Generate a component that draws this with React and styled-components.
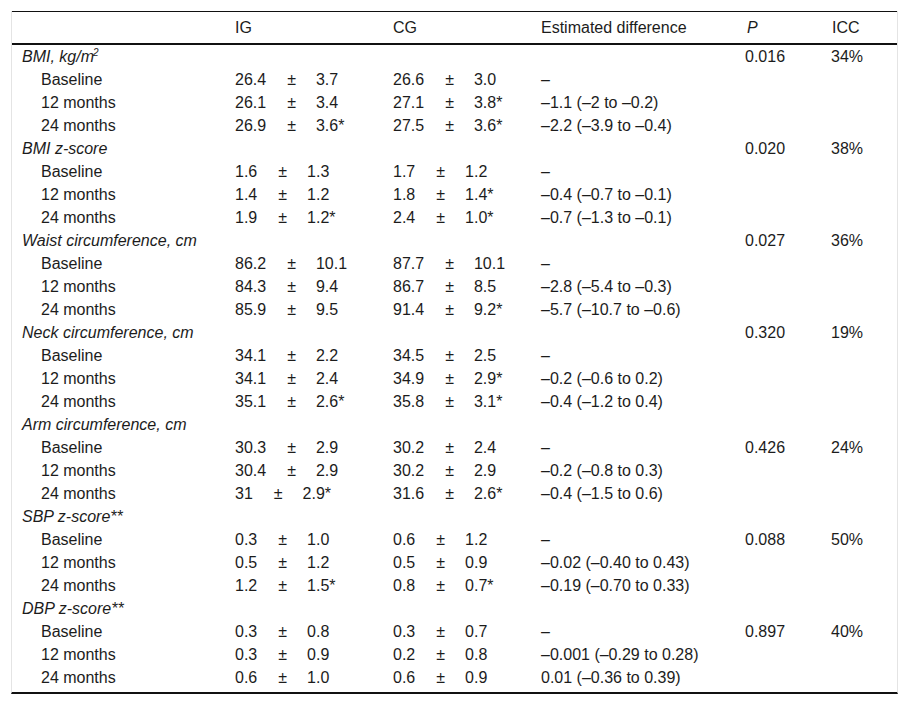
import React from "react";
import styled, { createGlobalStyle } from "styled-components";

const Global = createGlobalStyle`
  html, body { margin: 0; padding: 0; background: #fff; }
  body { font-family: "Liberation Sans", Arial, sans-serif; color: #1c1c1c; }
`;

const Frame = styled.div`
  margin: 11px 0 0 11px;
  width: 885px;
  border-left: 1px solid #e4e4e4;
  border-right: 1px solid #e4e4e4;
  border-bottom: 2px solid #111;
  padding-bottom: 3px;
`;

const Table = styled.table`
  width: 885px;
  border-collapse: collapse;
  table-layout: fixed;
  font-size: 16px;
`;

const Head = styled.thead`
  border-top: 1px solid #111;
  border-bottom: 2px solid #111;
`;

const Th = styled.th`
  height: 31px;
  padding: 0 0 0 ${(p) => p.$pl || 0}px;
  text-align: left;
  font-weight: normal;
  font-style: ${(p) => (p.$italic ? "italic" : "normal")};
  vertical-align: middle;
  line-height: 31px;
`;

const Td = styled.td`
  height: 23px;
  padding: 0 0 0 ${(p) => p.$pl || 0}px;
  line-height: 23px;
  text-align: left;
  vertical-align: middle;
  white-space: nowrap;
  font-style: ${(p) => (p.$italic ? "italic" : "normal")};
`;

const Stat = styled.span`
  display: inline-flex;
  align-items: baseline;
`;

const Pm = styled.span`
  margin: 0 20px 0 21px;
`;

const Sup = styled.sup`
  font-size: 10px;
  line-height: 0;
  vertical-align: 6px;
  margin-left: -1px;
`;

const groups = [
  {
    label: (
      <>
        BMI, kg/m<Sup>2</Sup>
      </>
    ),
    at: "label",
    p: "0.016",
    icc: "34%",
    rows: [
      ["Baseline", ["26.4", "3.7"], ["26.6", "3.0"], "–"],
      ["12 months", ["26.1", "3.4"], ["27.1", "3.8*"], "–1.1 (–2 to –0.2)"],
      ["24 months", ["26.9", "3.6*"], ["27.5", "3.6*"], "–2.2 (–3.9 to –0.4)"],
    ],
  },
  {
    label: "BMI z-score",
    at: "label",
    p: "0.020",
    icc: "38%",
    rows: [
      ["Baseline", ["1.6", "1.3"], ["1.7", "1.2"], "–"],
      ["12 months", ["1.4", "1.2"], ["1.8", "1.4*"], "–0.4 (–0.7 to –0.1)"],
      ["24 months", ["1.9", "1.2*"], ["2.4", "1.0*"], "–0.7 (–1.3 to –0.1)"],
    ],
  },
  {
    label: "Waist circumference, cm",
    at: "label",
    p: "0.027",
    icc: "36%",
    rows: [
      ["Baseline", ["86.2", "10.1"], ["87.7", "10.1"], "–"],
      ["12 months", ["84.3", "9.4"], ["86.7", "8.5"], "–2.8 (–5.4 to –0.3)"],
      ["24 months", ["85.9", "9.5"], ["91.4", "9.2*"], "–5.7 (–10.7 to –0.6)"],
    ],
  },
  {
    label: "Neck circumference, cm",
    at: "label",
    p: "0.320",
    icc: "19%",
    rows: [
      ["Baseline", ["34.1", "2.2"], ["34.5", "2.5"], "–"],
      ["12 months", ["34.1", "2.4"], ["34.9", "2.9*"], "–0.2 (–0.6 to 0.2)"],
      ["24 months", ["35.1", "2.6*"], ["35.8", "3.1*"], "–0.4 (–1.2 to 0.4)"],
    ],
  },
  {
    label: "Arm circumference, cm",
    at: "baseline",
    p: "0.426",
    icc: "24%",
    rows: [
      ["Baseline", ["30.3", "2.9"], ["30.2", "2.4"], "–"],
      ["12 months", ["30.4", "2.9"], ["30.2", "2.9"], "–0.2 (–0.8 to 0.3)"],
      ["24 months", ["31", "2.9*"], ["31.6", "2.6*"], "–0.4 (–1.5 to 0.6)"],
    ],
  },
  {
    label: "SBP z-score**",
    at: "baseline",
    p: "0.088",
    icc: "50%",
    rows: [
      ["Baseline", ["0.3", "1.0"], ["0.6", "1.2"], "–"],
      ["12 months", ["0.5", "1.2"], ["0.5", "0.9"], "–0.02 (–0.40 to 0.43)"],
      ["24 months", ["1.2", "1.5*"], ["0.8", "0.7*"], "–0.19 (–0.70 to 0.33)"],
    ],
  },
  {
    label: "DBP z-score**",
    at: "baseline",
    p: "0.897",
    icc: "40%",
    rows: [
      ["Baseline", ["0.3", "0.8"], ["0.3", "0.7"], "–"],
      ["12 months", ["0.3", "0.9"], ["0.2", "0.8"], "–0.001 (–0.29 to 0.28)"],
      ["24 months", ["0.6", "1.0"], ["0.6", "0.9"], "0.01 (–0.36 to 0.39)"],
    ],
  },
];

function StatCell({ v }) {
  return (
    <Td>
      <Stat>
        <span>{v[0]}</span>
        <Pm>±</Pm>
        <span>{v[1]}</span>
      </Stat>
    </Td>
  );
}

export default function App() {
  return (
    <>
      <Global />
      <Frame>
        <Table>
          <colgroup>
            <col style={{ width: 223 }} />
            <col style={{ width: 158 }} />
            <col style={{ width: 148 }} />
            <col style={{ width: 204 }} />
            <col style={{ width: 86 }} />
            <col style={{ width: 66 }} />
          </colgroup>
          <Head>
            <tr>
              <Th />
              <Th>IG</Th>
              <Th>CG</Th>
              <Th>Estimated difference</Th>
              <Th $italic $pl={2}>P</Th>
              <Th $pl={1}>ICC</Th>
            </tr>
          </Head>
          <tbody>
            {groups.map((g, gi) => (
              <React.Fragment key={gi}>
                <tr>
                  <Td $italic $pl={10}>{g.label}</Td>
                  <Td />
                  <Td />
                  <Td />
                  <Td>{g.at === "label" ? g.p : ""}</Td>
                  <Td>{g.at === "label" ? g.icc : ""}</Td>
                </tr>
                {g.rows.map((r, ri) => (
                  <tr key={ri}>
                    <Td $pl={29}>{r[0]}</Td>
                    <StatCell v={r[1]} />
                    <StatCell v={r[2]} />
                    <Td>{r[3]}</Td>
                    <Td>{g.at === "baseline" && ri === 0 ? g.p : ""}</Td>
                    <Td>{g.at === "baseline" && ri === 0 ? g.icc : ""}</Td>
                  </tr>
                ))}
              </React.Fragment>
            ))}
          </tbody>
        </Table>
      </Frame>
    </>
  );
}
